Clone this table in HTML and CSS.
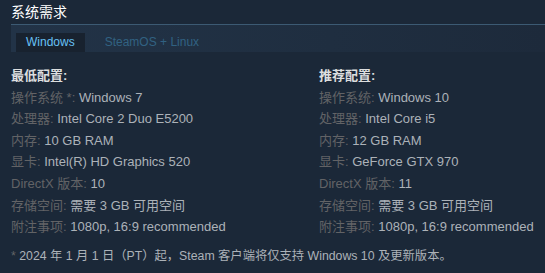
FILE: index.html
```html
<!DOCTYPE html>
<html lang="zh-CN">
<head>
<meta charset="utf-8">
<link rel="stylesheet" href="styles.css">
</head>
<body>
<div class="sysreq">
  <h2 class="title">系统需求</h2>
  <div class="tabs">
    <div class="tab active">Windows</div>
    <div class="tab">SteamOS + Linux</div>
  </div>
  <div class="cols">
    <ul class="col">
      <li class="head">最低配置:</li>
      <li><span class="lbl">操作系统 *:</span> Windows 7</li>
      <li><span class="lbl">处理器:</span> Intel Core 2 Duo E5200</li>
      <li><span class="lbl">内存:</span> 10 GB RAM</li>
      <li><span class="lbl">显卡:</span> Intel(R) HD Graphics 520</li>
      <li><span class="lbl">DirectX 版本:</span> 10</li>
      <li><span class="lbl">存储空间:</span> 需要 3 GB 可用空间</li>
      <li><span class="lbl">附注事项:</span> 1080p, 16:9 recommended</li>
    </ul>
    <ul class="col">
      <li class="head">推荐配置:</li>
      <li><span class="lbl">操作系统:</span> Windows 10</li>
      <li><span class="lbl">处理器:</span> Intel Core i5</li>
      <li><span class="lbl">内存:</span> 12 GB RAM</li>
      <li><span class="lbl">显卡:</span> GeForce GTX 970</li>
      <li><span class="lbl">DirectX 版本:</span> 11</li>
      <li><span class="lbl">存储空间:</span> 需要 3 GB 可用空间</li>
      <li><span class="lbl">附注事项:</span> 1080p, 16:9 recommended</li>
    </ul>
  </div>
  <p class="note"><span class="star">*</span> 2024 年 1 月 1 日（PT）起，Steam 客户端将仅支持 Windows 10 及更新版本。</p>
</div>
</body>
</html>
```
FILE: styles.css
```css
html, body {
  margin: 0;
  padding: 0;
  background: #1b2838;
}
body {
  font-family: Arial, "Liberation Sans", "Noto Sans CJK SC", sans-serif;
  font-size: 13px;
  color: #acb2b8;
  width: 545px;
  height: 273px;
  overflow: hidden;
}
.sysreq {
  padding-left: 11px;
}
.title {
  margin: 0;
  height: 24px;
  line-height: 24px;
  font-size: 14px;
  font-weight: normal;
  color: #ffffff;
}
.tabs {
  border-top: 1px solid #3c5a73;
  height: 27px;
  background: linear-gradient(90deg, #223347 0%, #1f2e40 60%, #1d2a3b 100%);
  display: flex;
  align-items: flex-end;
  padding-left: 5px;
}
.tab {
  height: 19px;
  line-height: 19px;
  font-size: 12px;
  padding: 0 10px;
  color: #316282;
}
.tab.active {
  background: #18222f;
  color: #67c1f5;
}
.tab + .tab {
  margin-left: 10px;
}
.cols {
  display: grid;
  grid-template-columns: 308px 1fr;
  margin-top: 13px;
}
.col {
  list-style: none;
  margin: 0;
  padding: 0;
}
.col li {
  height: 21.6px;
  line-height: 21.6px;
  white-space: nowrap;
}
.col .head {
  color: #dcdedf;
  font-weight: bold;
}
.lbl {
  color: #626366;
}
.note {
  margin: 8px 0 0;
  font-size: 12.3px;
  line-height: 21.6px;
  white-space: nowrap;
}
.star {
  color: #626366;
}
```
